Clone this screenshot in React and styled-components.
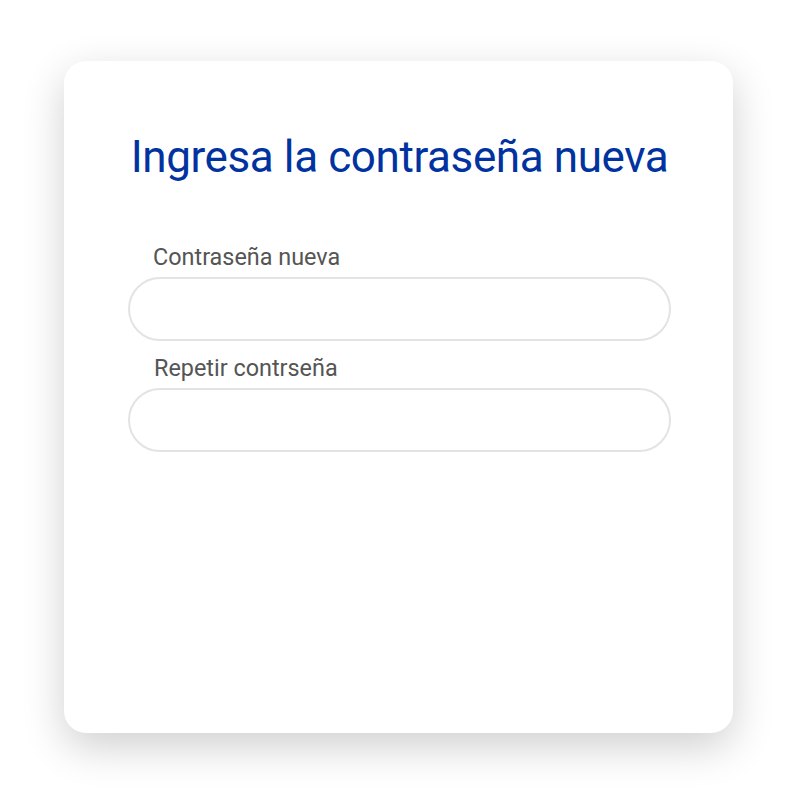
import React from "react";
import styled, { createGlobalStyle } from "styled-components";

const GlobalStyle = createGlobalStyle`
  body {
    margin: 0;
    background: #ffffff;
    font-family: Roboto, "Noto Sans", sans-serif;
  }
`;

const Page = styled.div`
  width: 796px;
  height: 796px;
  padding: 61px 0 0 64px;
  box-sizing: border-box;
`;

const Card = styled.div`
  width: 669px;
  height: 672px;
  box-sizing: border-box;
  padding: 70px 62px 0 64px;
  background: #ffffff;
  border-radius: 22px;
  box-shadow: 0 14px 42px rgba(0, 0, 0, 0.19);
  display: flex;
  flex-direction: column;
`;

const Title = styled.h1`
  margin: 0 0 60px;
  font-size: 44px;
  line-height: 52px;
  font-weight: 400;
  color: #0033a0;
  text-align: center;
  letter-spacing: -0.4px;
`;

const Field = styled.div`
  display: flex;
  flex-direction: column;
  margin-bottom: ${(p) => p.$gap || 0}px;
`;

const Label = styled.label`
  padding-left: ${(p) => p.$indent}px;
  font-size: 23.4px;
  line-height: 28px;
  color: #555555;
  margin-bottom: 6px;
`;

const Input = styled.input`
  height: 64px;
  box-sizing: border-box;
  border: 2px solid #e3e3e3;
  border-radius: 32px;
  padding: 0 24px;
  font-size: 20px;
  font-family: inherit;
  outline: none;
  background: #fff;
`;

export default function App() {
  return (
    <>
      <GlobalStyle />
      <Page>
        <Card>
          <Title>Ingresa la contraseña nueva</Title>
          <Field $gap={13}>
            <Label $indent={25}>Contraseña nueva</Label>
            <Input type="password" />
          </Field>
          <Field>
            <Label $indent={26}>Repetir contrseña</Label>
            <Input type="password" />
          </Field>
        </Card>
      </Page>
    </>
  );
}
